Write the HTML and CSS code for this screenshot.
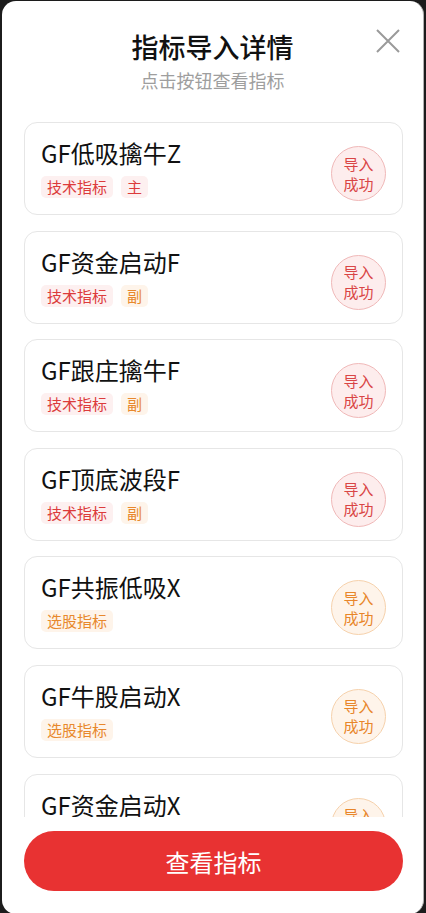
FILE: index.html
```html
<!DOCTYPE html>
<html lang="zh-CN">
<head>
    <meta charset="UTF-8">
    <meta name="viewport" content="width=device-width, initial-scale=1.0">
    <title>指标导入详情</title>
    <link rel="stylesheet" href="styles.css">
</head>
<body>
    <div class="sheet">
        <div class="sheet-header">
            <h1>指标导入详情</h1>
            <p>点击按钮查看指标</p>
            <button class="close-btn" aria-label="关闭">
                <svg width="26" height="26" viewBox="0 0 26 26">
                    <path d="M2 2 L24 24 M24 2 L2 24" stroke="#9a9a9a" stroke-width="2" fill="none"/>
                </svg>
            </button>
        </div>

        <div class="list">
            <div class="card">
                <div class="card-info">
                    <div class="card-title">GF低吸擒牛Z</div>
                    <div class="tags">
                        <span class="tag tag-red">技术指标</span>
                        <span class="tag tag-red">主</span>
                    </div>
                </div>
                <div class="badge badge-red">导入<br>成功</div>
            </div>

            <div class="card">
                <div class="card-info">
                    <div class="card-title">GF资金启动F</div>
                    <div class="tags">
                        <span class="tag tag-red">技术指标</span>
                        <span class="tag tag-orange">副</span>
                    </div>
                </div>
                <div class="badge badge-red">导入<br>成功</div>
            </div>

            <div class="card">
                <div class="card-info">
                    <div class="card-title">GF跟庄擒牛F</div>
                    <div class="tags">
                        <span class="tag tag-red">技术指标</span>
                        <span class="tag tag-orange">副</span>
                    </div>
                </div>
                <div class="badge badge-red">导入<br>成功</div>
            </div>

            <div class="card">
                <div class="card-info">
                    <div class="card-title">GF顶底波段F</div>
                    <div class="tags">
                        <span class="tag tag-red">技术指标</span>
                        <span class="tag tag-orange">副</span>
                    </div>
                </div>
                <div class="badge badge-red">导入<br>成功</div>
            </div>

            <div class="card">
                <div class="card-info">
                    <div class="card-title">GF共振低吸X</div>
                    <div class="tags">
                        <span class="tag tag-orange">选股指标</span>
                    </div>
                </div>
                <div class="badge badge-orange">导入<br>成功</div>
            </div>

            <div class="card">
                <div class="card-info">
                    <div class="card-title">GF牛股启动X</div>
                    <div class="tags">
                        <span class="tag tag-orange">选股指标</span>
                    </div>
                </div>
                <div class="badge badge-orange">导入<br>成功</div>
            </div>

            <div class="card">
                <div class="card-info">
                    <div class="card-title">GF资金启动X</div>
                    <div class="tags">
                        <span class="tag tag-orange">选股指标</span>
                    </div>
                </div>
                <div class="badge badge-orange">导入<br>成功</div>
            </div>
        </div>

        <div class="sheet-footer">
            <button class="view-btn">查看指标</button>
        </div>
    </div>
</body>
</html>
```

FILE: styles.css
```css
* {
    margin: 0;
    padding: 0;
    box-sizing: border-box;
}

html, body {
    height: 100%;
}

body {
    font-family: "Noto Sans CJK SC", "Noto Sans", sans-serif;
    background: #1c1c1c;
    overflow: hidden;
}

.sheet {
    margin: 1px 2px 0 2px;
    height: 913px;
    background: #fff;
    border-radius: 14px;
    border-right: 1px solid #b0b0b0;
    display: flex;
    flex-direction: column;
    position: relative;
}

.sheet-header {
    padding-top: 28px;
    text-align: center;
    height: 106px;
}

.sheet-header h1 {
    font-size: 27px;
    font-weight: 500;
    line-height: 36px;
    color: #111;
}

.sheet-header p {
    margin-top: 3px;
    font-size: 18px;
    line-height: 24px;
    color: #9e9e9e;
}

.close-btn {
    position: absolute;
    top: 27px;
    right: 22px;
    background: none;
    border: none;
    width: 26px;
    height: 26px;
}

.list {
    height: 710px;
    overflow: hidden;
    padding: 15px 20px 0 22px;
    display: flex;
    flex-direction: column;
    gap: 15.6px;
}

.card {
    flex-shrink: 0;
    height: 93px;
    border: 1px solid #e6e6e6;
    border-radius: 13px;
    padding: 15px 16px 0 16px;
    display: flex;
    justify-content: space-between;
    align-items: flex-start;
}

.card-title {
    font-size: 24px;
    line-height: 30px;
    color: #111;
}

.tags {
    margin-top: 8px;
    display: flex;
    gap: 8px;
}

.tag {
    font-size: 15px;
    line-height: 22px;
    padding: 0 6px;
    border-radius: 5px;
}

.tag-red {
    background: #fdf0f0;
    color: #dc3b3b;
}

.tag-orange {
    background: #fef4ea;
    color: #e8882c;
}

.badge {
    margin-top: 8px;
    width: 55px;
    height: 55px;
    border-radius: 50%;
    font-size: 15px;
    line-height: 20px;
    text-align: center;
    display: flex;
    align-items: center;
    justify-content: center;
}

.badge-red {
    background: #fdeded;
    border: 1px solid #f0b8b8;
    color: #d94545;
}

.badge-orange {
    background: #fef4ea;
    border: 1px solid #f6d1ab;
    color: #e8862a;
}

.sheet-footer {
    padding: 14px 20px 0 22px;
}

.view-btn {
    width: 100%;
    height: 60px;
    border: none;
    border-radius: 30px;
    background: #e83232;
    color: #fff;
    font-family: "Noto Sans CJK SC", "Noto Sans", sans-serif;
    font-size: 24px;
}
```
